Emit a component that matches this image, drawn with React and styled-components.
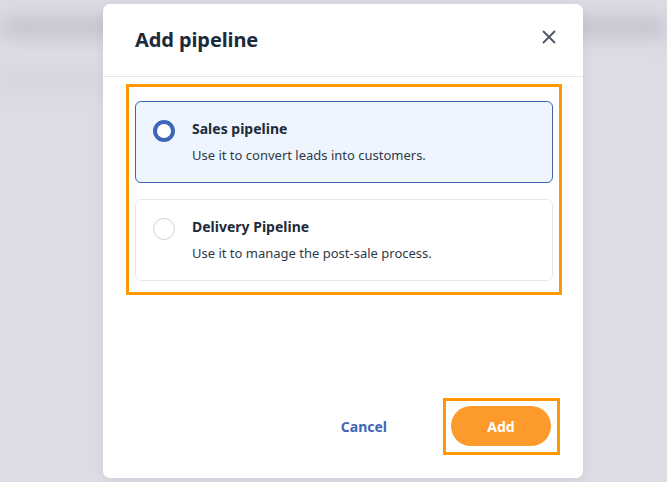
import React, { useState } from "react";
import styled, { createGlobalStyle } from "styled-components";

const GlobalStyle = createGlobalStyle`
  html, body {
    margin: 0;
    padding: 0;
    background: #dddbe4;
    font-family: "Noto Sans", "Open Sans", sans-serif;
  }
`;

const Page = styled.div`
  position: relative;
  width: 667px;
  height: 482px;
  overflow: hidden;
  background: #dddbe4;
`;

const Backdrop = styled.div`
  position: absolute;
  inset: -20px;
  filter: blur(10px);
  display: flex;
  flex-direction: column;
  gap: 40px;
  padding: 40px 20px 0;
`;

const BlurBar = styled.div`
  height: 14px;
  width: ${(p) => p.$w};
  background: ${(p) => p.$c};
  border-radius: 6px;
`;

const Overlay = styled.div`
  position: absolute;
  inset: 0;
  display: flex;
  justify-content: flex-start;
  padding: 4px 0 0 103px;
`;

const Modal = styled.div`
  width: 480px;
  height: 474px;
  background: #ffffff;
  border-radius: 7px;
  display: flex;
  flex-direction: column;
  box-shadow: 0 2px 10px rgba(60, 60, 80, 0.08);
`;

const Header = styled.div`
  display: flex;
  align-items: center;
  justify-content: space-between;
  padding: 0 22px 0 32px;
  border-bottom: 1px solid #e3e5e9;
  box-sizing: border-box;
  height: 73px;
`;

const Title = styled.h2`
  margin: 0;
  margin-top: -2px;
  font-size: 20px;
  font-weight: 700;
  color: #1e2b3a;
  letter-spacing: -0.1px;
`;

const CloseButton = styled.button`
  border: none;
  background: none;
  padding: 0;
  width: 24px;
  height: 24px;
  display: flex;
  align-items: center;
  justify-content: center;
  color: #4b5563;
  cursor: pointer;
  margin-top: -6px;
`;

const Body = styled.div`
  flex: 1;
  padding: 7px 21px 0 23px;
`;

const Highlight = styled.div`
  border: 3px solid #ff9800;
  padding: 14px 6px 11px 6px;
  display: flex;
  flex-direction: column;
  gap: 16px;
`;

const Card = styled.label`
  height: 82px;
  box-sizing: border-box;
  border: 1px solid ${(p) => (p.$active ? "#3c64b1" : "#e5e7eb")};
  background: ${(p) => (p.$active ? "#eef5fe" : "#ffffff")};
  border-radius: 6px;
  display: flex;
  align-items: flex-start;
  padding: 18px 16px 0 17px;
  gap: 17px;
  cursor: pointer;
`;

const Radio = styled.span`
  width: 22px;
  height: 22px;
  box-sizing: border-box;
  border-radius: 50%;
  flex-shrink: 0;
  border: ${(p) => (p.$active ? "4px solid #3e67b8" : "1px solid #cfd2d6")};
  background: #ffffff;
`;

const CardText = styled.div`
  display: flex;
  flex-direction: column;
  gap: 7px;
`;

const CardTitle = styled.div`
  font-size: 14px;
  font-weight: 700;
  color: #1e2b3a;
  line-height: 20px;
  margin-top: -1px;
`;

const CardDesc = styled.div`
  font-size: 13px;
  color: #2f3a47;
  line-height: 18px;
`;

const Footer = styled.div`
  display: flex;
  justify-content: flex-end;
  align-items: center;
  padding: 0 23px 23px 0;
  gap: 48px;
`;

const CancelButton = styled.button`
  border: none;
  background: none;
  font-family: inherit;
  font-size: 14px;
  font-weight: 700;
  color: #3d66b5;
  padding: 8px 8px;
  cursor: pointer;
`;

const FooterHighlight = styled.div`
  border: 3px solid #ff9800;
  padding: 5px 6px 6px 5px;
`;

const AddButton = styled.button`
  width: 100px;
  height: 40px;
  border: none;
  border-radius: 20px;
  background: #fd9a2c;
  color: #ffffff;
  font-family: inherit;
  font-size: 14px;
  font-weight: 700;
  cursor: pointer;
  display: block;
`;

const options = [
  { id: "sales", title: "Sales pipeline", desc: "Use it to convert leads into customers." },
  { id: "delivery", title: "Delivery Pipeline", desc: "Use it to manage the post-sale process." },
];

export default function App() {
  const [selected, setSelected] = useState("sales");

  return (
    <Page>
      <GlobalStyle />
      <Backdrop>
        <BlurBar $w="100%" $c="#b9b7c2" />
        <BlurBar $w="40%" $c="#d3d1db" />
      </Backdrop>
      <Overlay>
        <Modal>
          <Header>
            <Title>Add pipeline</Title>
            <CloseButton aria-label="Close">
              <svg width="14" height="14" viewBox="0 0 14 14" fill="none">
                <path d="M1.5 1.5L12.5 12.5M12.5 1.5L1.5 12.5" stroke="#4b5563" strokeWidth="1.8" strokeLinecap="round" />
              </svg>
            </CloseButton>
          </Header>
          <Body>
            <Highlight>
              {options.map((o) => (
                <Card key={o.id} $active={selected === o.id} onClick={() => setSelected(o.id)}>
                  <Radio $active={selected === o.id} />
                  <CardText>
                    <CardTitle>{o.title}</CardTitle>
                    <CardDesc>{o.desc}</CardDesc>
                  </CardText>
                </Card>
              ))}
            </Highlight>
          </Body>
          <Footer>
            <CancelButton>Cancel</CancelButton>
            <FooterHighlight>
              <AddButton>Add</AddButton>
            </FooterHighlight>
          </Footer>
        </Modal>
      </Overlay>
    </Page>
  );
}
